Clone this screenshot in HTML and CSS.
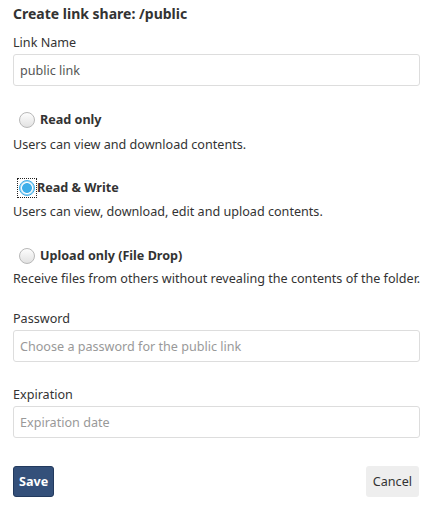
FILE: index.html
```html
<!DOCTYPE html>
<html>
<head>
<meta charset="utf-8">
<link rel="stylesheet" href="styles.css">
</head>
<body>
<form class="share">
  <h1 class="title">Create link share: /public</h1>
  <label class="field-label">Link Name</label>
  <input class="text" type="text" value="public link">

  <div class="opt first">
    <label class="opt-label"><span class="radio"></span>Read only</label>
    <div class="opt-desc">Users can view and download contents.</div>
  </div>
  <div class="opt">
    <label class="opt-label"><span class="focus"><span class="radio checked"></span></span>Read &amp; Write</label>
    <div class="opt-desc mid">Users can view, download, edit and upload contents.</div>
  </div>
  <div class="opt third">
    <label class="opt-label"><span class="radio"></span>Upload only (File Drop)</label>
    <div class="opt-desc last">Receive files from others without revealing the contents of the folder.</div>
  </div>

  <label class="field-label pw">Password</label>
  <input class="text" type="text" placeholder="Choose a password for the public link">

  <label class="field-label exp">Expiration</label>
  <input class="text" type="text" placeholder="Expiration date">

  <div class="actions">
    <button class="btn save" type="button">Save</button>
    <button class="btn cancel" type="button">Cancel</button>
  </div>
</form>
</body>
</html>
```
FILE: styles.css
```css
html, body { margin: 0; background: #fff; }
body {
  font-family: "Noto Sans", "Open Sans", sans-serif;
  font-size: 12.6px;
  color: #333;
  padding: 4px 14px 0 13px;
}
.share { display: flex; flex-direction: column; }
.title { font-size: 14px; font-weight: bold; margin: 0 0 11px; line-height: 19px; color: #333; }
.field-label { line-height: 17px; margin-bottom: 3px; }
.text {
  box-sizing: border-box;
  height: 32px;
  width: 100%;
  border: 1px solid #ddd;
  border-radius: 3px;
  padding: 0 6px;
  font: inherit;
  color: #555;
  outline: none;
}
.text::placeholder { color: #999; }
.opt { display: flex; flex-direction: column; margin-top: 25px; }
.opt.third { margin-top: 26px; }
.opt-label { display: flex; align-items: center; font-weight: bold; line-height: 18px; }
.radio {
  box-sizing: border-box;
  width: 16px; height: 16px;
  border-radius: 50%;
  border: 1px solid #b8b8b8;
  background: linear-gradient(#fdfdfd, #e2e2e2);
  margin: 0 5px 0 6px;
  flex: none;
}
.focus {
  display: flex;
  outline: 1px dotted #222;
  outline-offset: 0;
  margin: 0 1px 0 5px;
  padding: 1px;
}
.focus .radio { margin: 0; }
.radio.checked {
  border: 1px solid #3daee9;
  background: radial-gradient(circle, #3daee9 0 4.5px, #fff 5.3px, #fff 5.5px, #a6d8f3 6.5px);
}
.opt-desc { line-height: 18px; margin-top: 7px; white-space: nowrap; }
.opt-desc.mid { margin-top: 6px; }
.opt-desc.last { margin-top: 5px; }
.pw { margin-top: 22px; }
.exp { margin-top: 24px; }
.actions { display: flex; justify-content: space-between; margin-top: 28px; }
.btn { font: inherit; font-size: 12.6px; height: 31px; border-radius: 3px; cursor: pointer; }
.save {
  background: #34507a; color: #fff; font-weight: bold;
  border: 1px solid #223a5e; padding: 0 5px;
}
.cancel { background: #eee; color: #333; border: none; padding: 0 7px; margin-right: 1px; }
```
